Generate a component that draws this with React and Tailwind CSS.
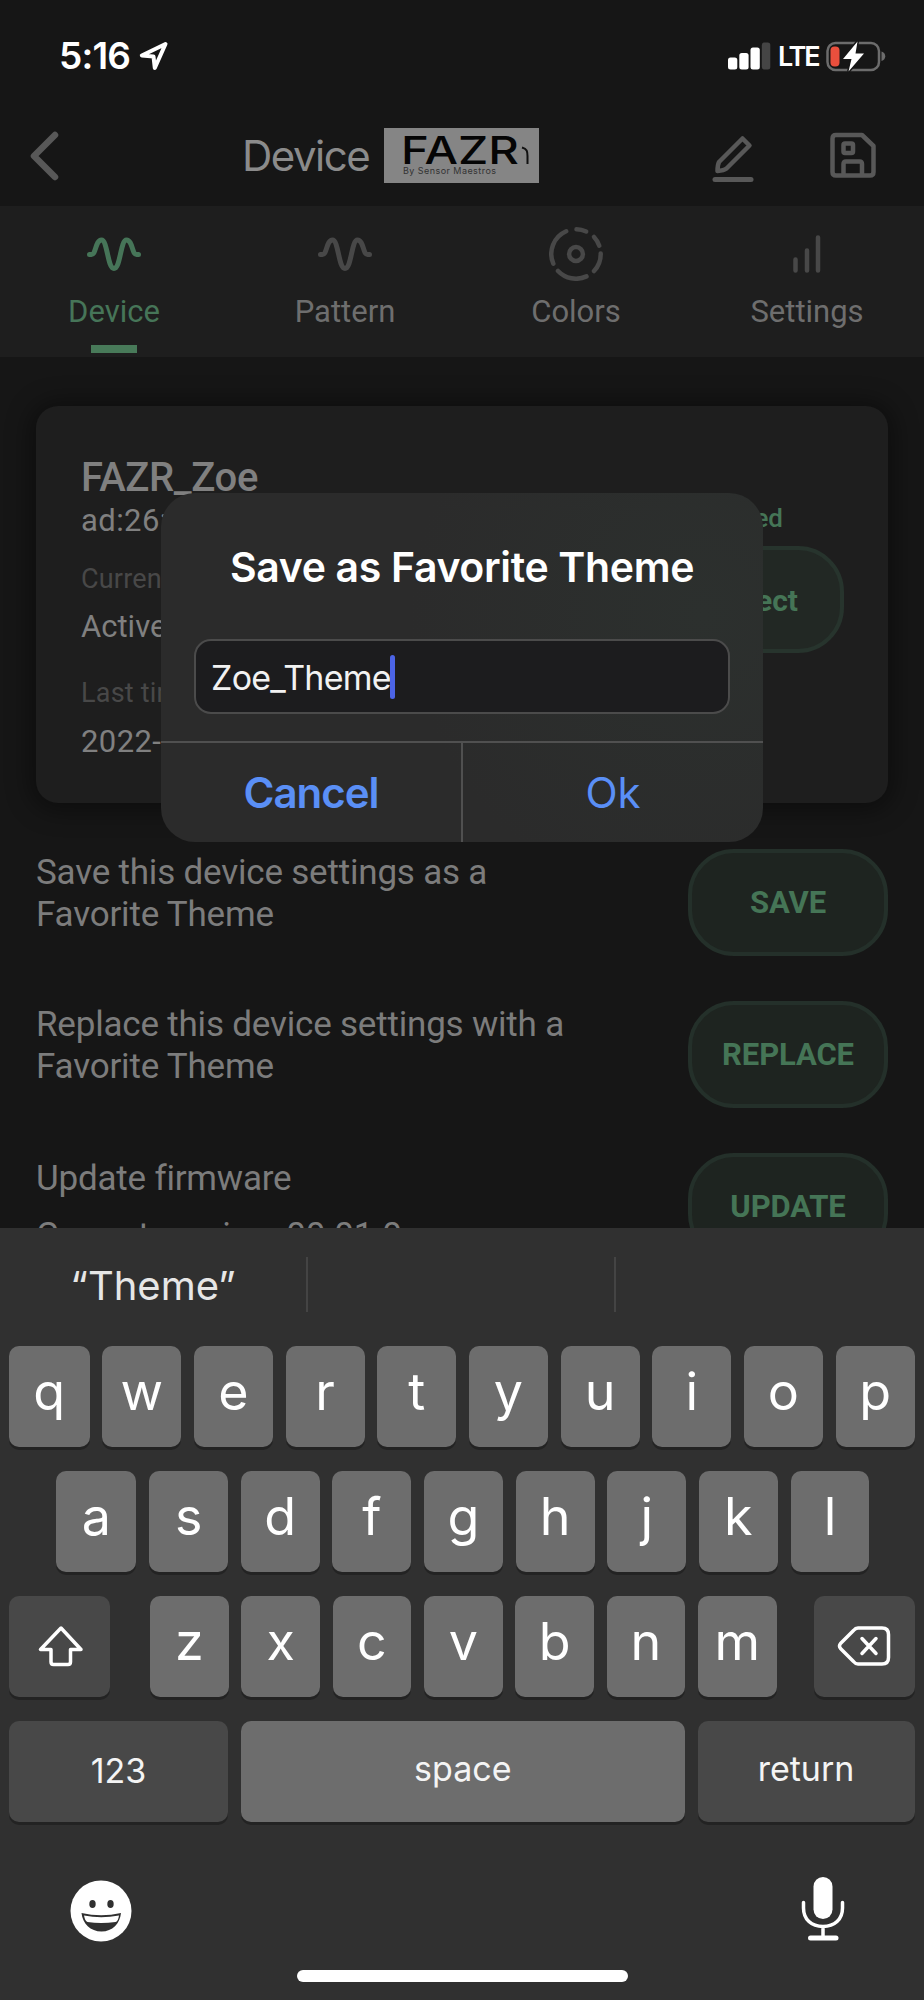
const tabs = [
  { label: "Device", icon: WaveIcon, active: true },
  { label: "Pattern", icon: WaveIcon },
  { label: "Colors", icon: ColorsIcon },
  { label: "Settings", icon: BarsIcon },
];

function WaveIcon() {
  return (
    <svg width="54" height="54" viewBox="0 0 54 54" fill="none" stroke="currentColor" strokeWidth="5" strokeLinecap="round">
      <path d="M2.5 27.5h2C9 27.5 8.5 13 14.5 13S20.500 41.500 27 41.500S33.500 13 39.500 13S45 27.500 49.500 27.500h2" />
    </svg>
  );
}

function ColorsIcon() {
  return (
    <svg width="54" height="54" viewBox="-27 -27 54 54" fill="none" stroke="currentColor" strokeWidth="4.5" strokeLinecap="round">
      <circle r="6.9" />
      <path d="M0.500-24.700A24.700 24.700 0 0 1 10.200-22.500" />
      <path d="M18-17A24.700 24.700 0 0 1 23.300-8.300" />
      <path d="M24.700-0.500A24.700 24.700 0 0 1 18 17" />
      <path d="M10.500 22.400A24.700 24.700 0 0 1-18 17" />
      <path d="M-22.700 9.700A24.700 24.700 0 0 1-9.800-22.700" />
    </svg>
  );
}

function BarsIcon() {
  return (
    <svg width="54" height="54" viewBox="0 0 54 54" fill="none" stroke="currentColor" strokeWidth="4.5" strokeLinecap="round">
      <path d="M15.500 32.500V43.500M27 23.500V43.500M38 10.500V43.500" />
    </svg>
  );
}

function StatusBar() {
  return (
    <div className="flex h-[109px] items-start justify-between pl-[59px] pr-[38px] pt-[36px] text-white">
      <div className="flex h-[40px] items-center">
        <span className="w-[80px] text-[37px] font-semibold leading-[40px] tracking-[-0.8px]">5:16</span>
        <svg width="30" height="30" viewBox="0 0 30 30" fill="none" stroke="currentColor" strokeWidth="4" strokeLinejoin="round">
          <path d="M26.500 3L2.800 14.500L14.500 15.500L15.800 27Z" />
        </svg>
      </div>
      <div className="flex h-[40px] items-center">
        <svg width="43" height="28" viewBox="0 0 43 28" fill="currentColor">
          <rect x="0" y="15.500" width="9.300" height="12" rx="2.500" />
          <rect x="11.300" y="11" width="9.300" height="16.500" rx="2.500" />
          <rect x="22.500" y="5.500" width="9.300" height="22" rx="2.500" />
          <rect x="33.800" y="0.500" width="8.500" height="27" rx="2.500" fill="#454545" />
        </svg>
        <span className="ml-[7px] w-[48px] pt-[2px] text-[27px] font-semibold leading-[40px] tracking-[-2.2px]">LTE</span>
        <svg width="60" height="32" viewBox="0 0 60 32">
          <rect x="1.500" y="3" width="51.500" height="27" rx="8" fill="none" stroke="#6c6c6c" strokeWidth="2.500" />
          <path d="M55.500 11.500C60.500 12.500 60.500 20 55.500 21Z" fill="#6c6c6c" />
          <rect x="4.500" y="6.500" width="9" height="20" rx="4" fill="#ea4f3d" />
          <path d="M31.500 1.500L17 19H25.500L22.500 31.500L38 13.500H29.500Z" fill="#fff" stroke="#161616" strokeWidth="3" paintOrder="stroke" />
        </svg>
      </div>
    </div>
  );
}

function Header() {
  return (
    <div className="flex h-[97px] items-center pb-[4px] text-[#585858]">
      <svg className="ml-[28px]" width="34" height="52" viewBox="0 0 34 52" fill="none" stroke="currentColor" strokeWidth="6.5" strokeLinecap="round" strokeLinejoin="round">
        <path d="M27 5L6 26L27 47" />
      </svg>
      <div className="ml-[180px] w-[141.500px] text-[42px] leading-[52px] tracking-[-1.5px] text-[#8b8b8b]">Device</div>
      <svg width="155" height="55" viewBox="0 0 155 55">
        <rect width="155" height="55" fill="#858585" />
        <text x="17" y="36" fontSize="38" fontWeight="500" textLength="118" lengthAdjust="spacingAndGlyphs" fill="#050505" fontFamily="Inter, sans-serif">FAZR</text>
        <path d="M138 19.500C143 21 143.500 23 143.500 28V36" fill="none" stroke="#111" strokeWidth="2" />
        <text x="19" y="46" fontSize="9" textLength="93" fill="#333" fontFamily="Inter, sans-serif">By Sensor Maestros</text>
      </svg>
      <svg className="ml-[170px]" width="50" height="52" viewBox="0 0 50 52" fill="none" stroke="currentColor" strokeWidth="4.500" strokeLinecap="round" strokeLinejoin="round">
        <path d="M33.500 8.500L40.500 15.500L17.500 38.500Q15 40.500 8.500 41Q8.500 35 10 32Z" />
        <path d="M6 49.500H42" strokeWidth="5" />
      </svg>
      <svg className="ml-[69px]" width="50" height="50" viewBox="0 0 50 50" fill="none" stroke="currentColor" strokeWidth="4.500" strokeLinejoin="round">
        <path d="M8 4H34L45.500 15V41Q45.500 44.500 42 44.500H8Q4.500 44.500 4.500 41V7.500Q4.500 4 8 4Z" />
        <rect x="15.500" y="12.500" width="9.500" height="9.500" rx="1.500" />
        <path d="M15.500 44V33Q15.500 30.500 18 30.500H31.500Q34 30.500 34 33V44" />
      </svg>
    </div>
  );
}

function TabBar() {
  return (
    <div className="grid h-[151px] grid-cols-4 bg-[#1e1e1e] font-[Roboto,sans-serif]">
      {tabs.map(({ label, icon: Icon, active }) => (
        <div key={label} className={active ? "flex flex-col items-center pr-[3px] pt-[21px] text-[#467558]" : "flex flex-col items-center pr-[3px] pt-[21px] text-[#484848]"}>
          <Icon />
          <span className={active ? "mt-[11px] text-[31px] leading-[40px]" : "mt-[11px] text-[31px] leading-[40px] text-[#6e6e6e]"}>{label}</span>
          {active && <div className="mt-[13px] h-[8px] w-[46px] bg-[#487a59]" />}
        </div>
      ))}
    </div>
  );
}

function PillButton({ children }) {
  return (
    <button className="flex h-[107px] w-[200px] shrink-0 items-center justify-center rounded-[46px] border-4 border-[#24302a] bg-[#1e2420] pt-[2px] text-[31px] font-bold tracking-[-0.1px] text-[#457556]">
      {children}
    </button>
  );
}

function DeviceCard() {
  return (
    <div className="mx-[36px] mt-[49px] flex h-[397px] shrink-0 justify-between rounded-[22px] bg-[#1e1e1e] pl-[45px] pr-[44px] shadow-[0_2px_24px_6px_rgba(0,0,0,0.4)]">
      <div className="pt-[48px] text-[31px] tracking-[0.4px] text-[#808080]">
        <div className="text-[40px] font-medium leading-[48px] tracking-[-0.4px]">FAZR_Zoe</div>
        <div className="mt-[1px] leading-[36px]">ad:26:4f:1b</div>
        <div className="mt-[24px] text-[27px] leading-[32px] tracking-[0.2px] text-[#484848]">Current state</div>
        <div className="mt-[14px] leading-[36px] tracking-normal">Active</div>
        <div className="mt-[32px] text-[27px] leading-[32px] tracking-[0.2px] text-[#484848]">Last time</div>
        <div className="mt-[15px] leading-[36px]">2022-05-12</div>
      </div>
      <div className="flex flex-col items-end pt-[96px] text-[#457556]">
        <div className="mr-[61px] text-[26px] font-medium leading-[32px]">Connected</div>
        <div className="mt-[12px]">
          <button className="h-[107px] w-[240px] rounded-[46px] border-4 border-[#27342d] bg-[#222824] pr-[42px] pt-[2px] text-right text-[30px] font-bold">Disconnect</button>
        </div>
      </div>
    </div>
  );
}

function ActionRow({ lines, action }) {
  return (
    <div className="flex h-[152px] shrink-0 items-start justify-between px-[36px]">
      <div className="pt-[3px] text-[35px] leading-[42px] tracking-[-0.2px] text-[#7c7c7c]">
        {lines.map((line) => (
          <div key={line} className="whitespace-nowrap">{line}</div>
        ))}
      </div>
      <PillButton>{action}</PillButton>
    </div>
  );
}

function SaveDialog() {
  return (
    <div className="absolute left-[161px] top-[493px] flex h-[349px] w-[602px] flex-col overflow-hidden rounded-[34px] bg-[#2b2b2b] bg-[radial-gradient(circle_at_90%_35%,#2c302e_0%,#2b2b2b_50%)]">
      <div className="h-[146px] pt-[48px] text-center text-[41px] font-semibold leading-[52px] tracking-[-0.35px] text-white">
        Save as Favorite Theme
      </div>
      <div className="mx-[33px] flex h-[75px] items-center rounded-[17px] border-2 border-[#4b4b4b] bg-[#1c1c1e] pl-[15px]">
        <span className="pt-[2px] text-[34px] leading-[44px] tracking-[-0.75px] text-[#f2f2f2]">Zoe_Theme</span>
        <span className="-ml-[1px] h-[44px] w-[5px] rounded-full bg-[#4c64e6]" />
      </div>
      <div className="mt-[27px] flex flex-1 border-t-2 border-[#505050] text-[42px] text-[#5a8ff6]">
        <button className="w-[302px] border-r-2 border-[#505050] font-semibold tracking-[-1px]">Cancel</button>
        <button className="flex-1">Ok</button>
      </div>
    </div>
  );
}

function Key({ children }) {
  return (
    <div className="flex h-[101px] flex-1 items-center justify-center rounded-[10px] bg-[#6d6d6d] pb-[8px] text-[52px] text-white shadow-[0_3px_0_#232323]">
      {children}
    </div>
  );
}

function Keyboard() {
  return (
    <div className="flex h-[772px] flex-col bg-[#303030]">
      <div className="flex h-[117.500px] items-start pt-[29px]">
        <div className="flex h-[55px] w-[308px] items-center justify-center border-r-2 border-[#444444] pt-[2px] text-[40px] text-[#e6e6e6]">“Theme”</div>
        <div className="h-[55px] w-[308px] border-r-2 border-[#444444]" />
      </div>
      <div className="flex flex-col gap-[24px] pl-[9px] pr-[9.500px]">
        <div className="flex gap-[12.750px] [&>*:first-child]:flex-[1.02]">
          {"qwertyuiop".split("").map((k) => (
            <Key key={k}>{k}</Key>
          ))}
        </div>
        <div className="flex gap-[12.750px] pl-[47px] pr-[45px] [&>*:first-child]:flex-[1.02]">
          {"asdfghjkl".split("").map((k) => (
            <Key key={k}>{k}</Key>
          ))}
        </div>
        <div className="flex">
          <div className="flex h-[101px] w-[101px] items-center justify-center rounded-[10px] bg-[#484848] shadow-[0_3px_0_#232323]">
            <svg width="48" height="44" viewBox="0 0 48 44" fill="none" stroke="#fff" strokeWidth="3.500" strokeLinejoin="round">
              <path d="M25 4L4.500 25.500H15V38Q15 40.500 17.500 40.500H32Q34.500 40.500 34.500 38V25.500H45Z" />
            </svg>
          </div>
          <div className="ml-[40px] mr-[37px] flex flex-1 gap-[12.750px]">
            {"zxcvbnm".split("").map((k) => (
              <Key key={k}>{k}</Key>
            ))}
          </div>
          <div className="flex h-[101px] w-[101px] items-center justify-center rounded-[10px] bg-[#484848] shadow-[0_3px_0_#232323]">
            <svg width="54" height="42" viewBox="0 0 54 42" fill="none" stroke="#fff" strokeWidth="3.500" strokeLinejoin="round" strokeLinecap="round">
              <path d="M21 3H45Q51.500 3 51.500 9.500V32.500Q51.500 39 45 39H21Q18.500 39 16.500 36.500L3.500 23.500Q1.500 21 3.500 18.500L16.500 5.500Q18.500 3 21 3Z" />
              <path d="M25 13.500L39 28.500M39 13.500L25 28.500" />
            </svg>
          </div>
        </div>
        <div className="flex gap-[13px] text-[34px] text-[#f4f4f4]">
          <div className="flex h-[101px] w-[219px] items-center justify-center rounded-[10px] bg-[#484848] pb-[1px] shadow-[0_3px_0_#232323]">123</div>
          <div className="flex h-[101px] flex-1 items-center justify-center rounded-[10px] bg-[#6d6d6d] pb-[5px] shadow-[0_3px_0_#232323]">space</div>
          <div className="flex h-[101px] w-[217px] items-center justify-center rounded-[10px] bg-[#484848] pb-[5px] shadow-[0_3px_0_#232323]">return</div>
        </div>
      </div>
      <div className="mt-[54px] flex justify-between pl-[70px] pr-[78px]">
        <svg className="mt-[4px]" width="62" height="62" viewBox="0 0 62 62">
          <circle cx="31" cy="31" r="30.500" fill="#fff" />
          <ellipse cx="22.500" cy="24" rx="3.200" ry="4" fill="#303030" />
          <ellipse cx="40.500" cy="24" rx="3.200" ry="4" fill="#303030" />
          <path d="M11.500 33Q31 37.500 51 33C50 43.500 42.500 51.500 31.500 51.500S12.500 43.500 11.500 33Z" fill="#303030" />
          <path d="M14 35.500Q31 39 49 35.500Q48 42 45.500 42Q31 44 17.500 42Q15 41 14 35.500Z" fill="#fff" />
        </svg>
        <svg width="46" height="66" viewBox="0 0 46 66" fill="none" stroke="#fff" strokeWidth="3.500" strokeLinecap="round">
          <rect x="13.500" y="1" width="19" height="42" rx="9.500" fill="#fff" stroke="none" />
          <path d="M3.500 26.500V32C3.500 43.500 11.500 50.500 23 50.500S42.500 43.500 42.500 32V26.500M23 50.500V61" />
          <path d="M10.500 62H36" strokeWidth="5" />
        </svg>
      </div>
      <div className="mx-auto mt-[28px] h-[12px] w-[331px] rounded-full bg-white" />
    </div>
  );
}

export default function App() {
  return (
    <div className="relative flex h-[2000px] w-[924px] flex-col overflow-hidden bg-[#161616] font-[Inter,sans-serif]">
      <div className="flex h-[1228px] shrink-0 flex-col overflow-hidden">
        <StatusBar />
        <Header />
        <TabBar />
        <div className="flex flex-1 flex-col overflow-hidden font-[Roboto,sans-serif]">
          <DeviceCard />
          <div className="flex flex-col pt-[46px]">
            <ActionRow lines={["Save this device settings as a", "Favorite Theme"]} action="SAVE" />
            <ActionRow lines={["Replace this device settings with a", "Favorite Theme"]} action="REPLACE" />
            <div className="flex items-start justify-between px-[36px]">
              <div className="pt-[5px] text-[35px] leading-[42px] tracking-[-0.2px] text-[#7c7c7c]">
                <div>Update firmware</div>
                <div className="mt-[15px]">Current version: 00.01.0</div>
              </div>
              <PillButton>UPDATE</PillButton>
            </div>
          </div>
        </div>
      </div>
      <Keyboard />
      <SaveDialog />
    </div>
  );
}
